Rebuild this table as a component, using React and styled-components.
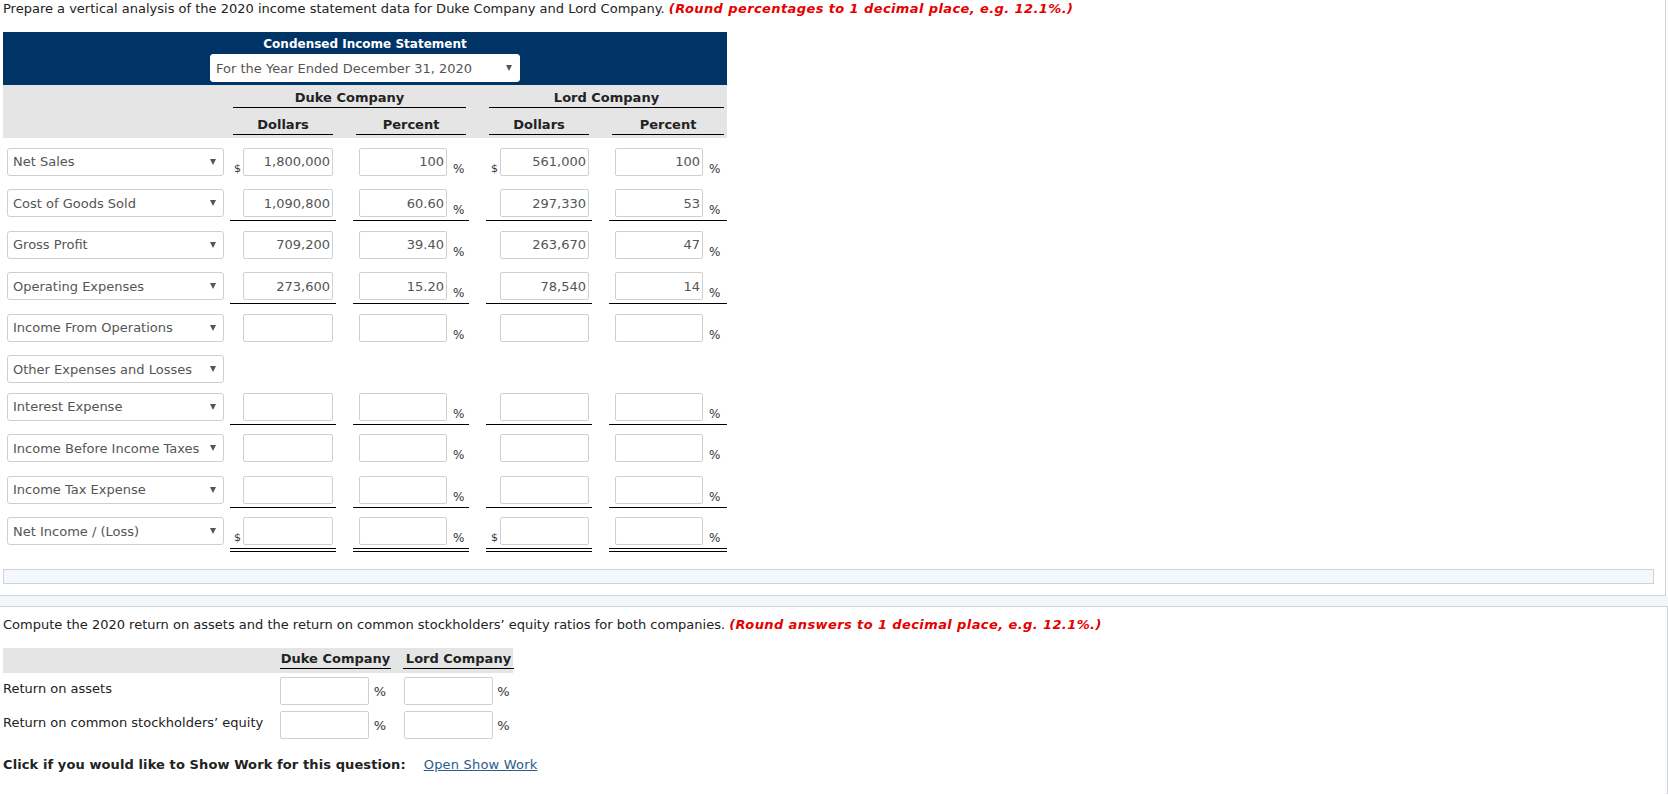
import styled, { createGlobalStyle } from "styled-components";

const GlobalStyle = createGlobalStyle`
  body {
    margin: 0;
    background: #fff;
    font-family: "DejaVu Sans", Verdana, sans-serif;
    font-size: 13px;
    color: #222;
  }
`;

// label | duke $ | gap | duke % | gap | lord $ | gap | lord %
const COLS = "227px 106px 17px 116px 17px 106px 17px 118px";
const RATIO_COLS = "277px 111px 12px 111px";

const UpperPanel = styled.div`
  width: 1666px;
  box-sizing: border-box;
  padding: 0 3px 11px;
  border-right: 1px solid #cfd4d8;
  border-bottom: 1px solid #cfd4d8;
`;

const Question = styled.p`
  margin: 0 0 14px;
  line-height: 18px;
`;

const Hint = styled.span`
  color: #e60000;
  font-weight: bold;
  font-style: italic;
  letter-spacing: 0.4px;
`;

const Statement = styled.div`
  width: 724px;
`;

const StatementHead = styled.div`
  background: #003366;
  padding: 5px 0 3px;
  display: flex;
  flex-direction: column;
  align-items: center;
`;

const HeadTitle = styled.div`
  color: #fff;
  font-weight: bold;
  font-size: 12px;
  line-height: 15px;
  margin-bottom: 2px;
`;

const Picker = styled.div`
  box-sizing: border-box;
  width: ${(p) => p.$width}px;
  height: 28px;
  background: #fff;
  border: 1px solid ${(p) => (p.$flat ? "#fff" : "#cfcfcf")};
  border-radius: 3px;
  padding: 0 7px 0 5px;
  display: flex;
  align-items: center;
  justify-content: space-between;
  color: #555;
  white-space: nowrap;
  margin-left: ${(p) => p.$indent || 0}px;
`;

const Caret = styled.span`
  width: 0;
  height: 0;
  flex: none;
  border-left: 3px solid transparent;
  border-right: 3px solid transparent;
  border-top: 6px solid #555;
`;

const ColumnHead = styled.div`
  background: #e5e5e5;
  padding: 4px 0 3px;
`;

const HeadRow = styled.div`
  display: grid;
  grid-template-columns: ${COLS};
  margin-top: ${(p) => p.$gap || 0}px;
`;

const HeadCell = styled.div`
  grid-column: ${(p) => p.$col};
  margin: 0 3px;
  text-align: center;
  font-weight: bold;
  line-height: 18px;
  border-bottom: 1px solid #000;
`;

const Row = styled.div`
  display: grid;
  grid-template-columns: ${COLS};
  align-items: start;
  padding-top: 9.5px;
`;

const ValueCell = styled.div`
  grid-column: ${(p) => p.$col};
  display: flex;
  align-items: flex-end;
  justify-content: ${(p) => (p.$percent ? "flex-start" : "flex-end")};
  padding: ${(p) => (p.$percent ? "0 0 3px 6px" : "0 3px 3px 0")};
  border-bottom: ${(p) =>
    p.$rule === "double"
      ? "4px double #000"
      : p.$rule === "single"
      ? "1px solid #000"
      : "1px solid transparent"};
`;

const Field = styled.input`
  box-sizing: border-box;
  width: ${(p) => p.$width}px;
  height: 28px;
  margin: 0;
  padding: 0 2px;
  border: 1px solid #cfcfcf;
  border-radius: 2px;
  background: #fff;
  font: inherit;
  color: #555;
  text-align: right;
  outline: none;
`;

const Dollar = styled.span`
  font-size: 11px;
  line-height: 11px;
  margin: 0 2px 2px 0;
  color: #333;
`;

const Pct = styled.span`
  font-size: 12px;
  line-height: 14px;
  margin: 0 0 0 6px;
  color: #333;
`;

const Notice = styled.div`
  margin: 17px 0 0;
  width: 1651px;
  height: 15px;
  box-sizing: border-box;
  background: #f4f7fb;
  border: 1px solid #cdd3d9;
`;

const Divider = styled.div`
  height: 10px;
  background: #f4f7fa;
`;

const LowerPanel = styled.div`
  box-sizing: border-box;
  width: 1668px;
  padding: 9px 3px 20px;
  border-top: 1px solid #cfd4d8;
  border-right: 1px solid #cfd4d8;
`;

const RatioHead = styled.div`
  display: grid;
  grid-template-columns: ${RATIO_COLS};
  width: 510px;
  margin-top: 13px;
  padding: 2px 0 4px;
  background: #e5e5e5;
`;

const RatioHeadCell = styled.div`
  grid-column: ${(p) => p.$col};
  font-weight: bold;
  line-height: 18px;
  text-align: center;
  border-bottom: 1px solid #000;
`;

const RatioRow = styled.div`
  display: grid;
  grid-template-columns: ${RATIO_COLS};
  align-items: center;
  margin-top: ${(p) => p.$gap}px;
`;

const RatioLabel = styled.span`
  padding-bottom: 5px;
`;

const RatioCell = styled.div`
  grid-column: ${(p) => p.$col};
  display: flex;
  align-items: center;
  padding-left: ${(p) => p.$pad || 0}px;
`;

const RatioPct = styled.span`
  flex: 1;
  text-align: center;
  color: #333;
`;

const WorkLine = styled.div`
  margin-top: 17px;
  line-height: 18px;
  display: flex;
  gap: 18px;
`;

const WorkLabel = styled.span`
  font-weight: bold;
  letter-spacing: 0.1px;
`;

const WorkLink = styled.a`
  color: #2d5b8a;
  text-decoration: underline;
  letter-spacing: 0.2px;
`;

const EMPTY = ["", "", "", ""];

const rows = [
  { label: "Net Sales", values: ["1,800,000", "100", "561,000", "100"], dollar: true },
  { label: "Cost of Goods Sold", values: ["1,090,800", "60.60", "297,330", "53"], rule: "single" },
  { label: "Gross Profit", values: ["709,200", "39.40", "263,670", "47"] },
  { label: "Operating Expenses", values: ["273,600", "15.20", "78,540", "14"], rule: "single" },
  { label: "Income From Operations", values: EMPTY },
  { label: "Other Expenses and Losses" },
  { label: "Interest Expense", values: EMPTY, rule: "single" },
  { label: "Income Before Income Taxes", values: EMPTY },
  { label: "Income Tax Expense", values: EMPTY, rule: "single" },
  { label: "Net Income / (Loss)", values: EMPTY, dollar: true, rule: "double" },
];

function StatementRow({ row }) {
  const [dukeAmt, dukePct, lordAmt, lordPct] = row.values || [];
  return (
    <Row>
      <Picker $width={217} $indent={4}>
        <span>{row.label}</span>
        <Caret />
      </Picker>
      {row.values && (
        <>
          <ValueCell $col="2" $rule={row.rule}>
            {row.dollar && <Dollar>$</Dollar>}
            <Field $width={90} value={dukeAmt} readOnly />
          </ValueCell>
          <ValueCell $col="4" $rule={row.rule} $percent>
            <Field $width={88} value={dukePct} readOnly />
            <Pct>%</Pct>
          </ValueCell>
          <ValueCell $col="6" $rule={row.rule}>
            {row.dollar && <Dollar>$</Dollar>}
            <Field $width={89} value={lordAmt} readOnly />
          </ValueCell>
          <ValueCell $col="8" $rule={row.rule} $percent>
            <Field $width={88} value={lordPct} readOnly />
            <Pct>%</Pct>
          </ValueCell>
        </>
      )}
    </Row>
  );
}

function RatioLine({ label, gap }) {
  return (
    <RatioRow $gap={gap}>
      <RatioLabel>{label}</RatioLabel>
      <RatioCell $col="2">
        <Field $width={89} value="" readOnly />
        <RatioPct>%</RatioPct>
      </RatioCell>
      <RatioCell $col="4" $pad={1}>
        <Field $width={89} value="" readOnly />
        <RatioPct>%</RatioPct>
      </RatioCell>
    </RatioRow>
  );
}

function App() {
  return (
    <>
      <GlobalStyle />
      <UpperPanel>
        <Question>
          Prepare a vertical analysis of the 2020 income statement data for Duke Company and
          Lord Company. <Hint>(Round percentages to 1 decimal place, e.g. 12.1%.)</Hint>
        </Question>
        <Statement>
          <StatementHead>
            <HeadTitle>Condensed Income Statement</HeadTitle>
            <Picker $width={310} $flat>
              <span>For the Year Ended December 31, 2020</span>
              <Caret />
            </Picker>
          </StatementHead>
          <ColumnHead>
            <HeadRow>
              <HeadCell $col="2 / 5">Duke Company</HeadCell>
              <HeadCell $col="6 / 9">Lord Company</HeadCell>
            </HeadRow>
            <HeadRow $gap={8}>
              <HeadCell $col="2">Dollars</HeadCell>
              <HeadCell $col="4">Percent</HeadCell>
              <HeadCell $col="6">Dollars</HeadCell>
              <HeadCell $col="8">Percent</HeadCell>
            </HeadRow>
          </ColumnHead>
          {rows.map((row) => (
            <StatementRow key={row.label} row={row} />
          ))}
        </Statement>
        <Notice />
      </UpperPanel>
      <Divider />
      <LowerPanel>
        <Question as="div">
          Compute the 2020 return on assets and the return on common stockholders’ equity ratios
          for both companies. <Hint>(Round answers to 1 decimal place, e.g. 12.1%.)</Hint>
        </Question>
        <RatioHead>
          <RatioHeadCell $col="2">Duke Company</RatioHeadCell>
          <RatioHeadCell $col="4">Lord Company</RatioHeadCell>
        </RatioHead>
        <RatioLine label="Return on assets" gap={4} />
        <RatioLine label="Return on common stockholders’ equity" gap={6} />
        <WorkLine>
          <WorkLabel>Click if you would like to Show Work for this question:</WorkLabel>
          <WorkLink href="#">Open Show Work</WorkLink>
        </WorkLine>
      </LowerPanel>
    </>
  );
}

export default App;
